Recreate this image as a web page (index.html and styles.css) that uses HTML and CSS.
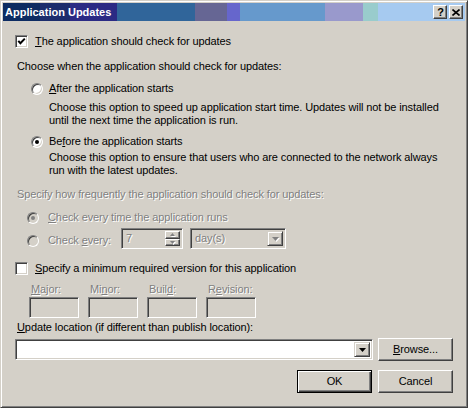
FILE: index.html
```html
<!DOCTYPE html>
<html>
<head>
<meta charset="utf-8">
<title>Application Updates</title>
<link rel="stylesheet" href="styles.css">
</head>
<body>
<div class="window">
  <div class="titlebar">
    <span class="title">Application Updates</span>
    <div class="caption-btns">
      <span class="cbtn help">?</span>
      <span class="cbtn close"><svg width="8" height="7" viewBox="0 0 8 7"><path d="M0.5 0.5 L7.5 6.5 M7.5 0.5 L0.5 6.5" stroke="#000" stroke-width="1.6"/></svg></span>
    </div>
  </div>
  <div class="content">
    <div class="row r-main">
      <span class="chk"><svg width="9" height="9" viewBox="0 0 9 9"><polyline points="1.3,3.8 3.4,6.2 7.8,1.6" fill="none" stroke="#000" stroke-width="2"/></svg></span>
      <span class="chk-label"><u>T</u>he application should check for updates</span>
    </div>
    <div class="row r-choose">Choose when the application should check for updates:</div>
    <div class="row r-after">
      <span class="radio"></span>
      <span class="radio-label"><u>A</u>fter the application starts</span>
    </div>
    <div class="desc d-after">Choose this option to speed up application start time. Updates will not be installed<br>until the next time the application is run.</div>
    <div class="row r-before">
      <span class="radio on"></span>
      <span class="radio-label">Be<u>f</u>ore the application starts</span>
    </div>
    <div class="desc d-before">Choose this option to ensure that users who are connected to the network always<br>run with the latest updates.</div>
    <div class="row r-spec disabled">Specify how frequently the application should check for updates:</div>
    <div class="row r-everytime">
      <span class="radio dis on"></span>
      <span class="radio-label disabled"><u>C</u>heck every time the application runs</span>
    </div>
    <div class="row r-every">
      <span class="radio dis"></span>
      <span class="radio-label disabled every-label">Check <u>e</u>very:</span>
      <div class="spin">
        <span class="spin-text disabled">7</span>
        <div class="spin-btns">
          <span class="spin-btn"><svg width="5" height="3" viewBox="0 0 5 3"><polygon points="0,3 5,3 2.5,0" fill="#808080"/></svg></span>
          <span class="spin-btn"><svg width="5" height="3" viewBox="0 0 5 3"><polygon points="0,0 5,0 2.5,3" fill="#808080"/></svg></span>
        </div>
      </div>
      <div class="combo combo-unit">
        <span class="combo-text disabled">day(s)</span>
        <span class="drop-btn"><svg width="7" height="4" viewBox="0 0 7 4"><polygon points="0,0 7,0 3.5,4" fill="#808080"/></svg></span>
      </div>
    </div>
    <div class="row r-min">
      <span class="chk"></span>
      <span class="chk-label"><u>S</u>pecify a minimum required version for this application</span>
    </div>
    <div class="version-grid">
      <div class="ver">
        <span class="ver-label disabled"><u>M</u>ajor:</span>
        <span class="field dis"></span>
      </div>
      <div class="ver">
        <span class="ver-label disabled">Mi<u>n</u>or:</span>
        <span class="field dis"></span>
      </div>
      <div class="ver">
        <span class="ver-label disabled">Buil<u>d</u>:</span>
        <span class="field dis"></span>
      </div>
      <div class="ver">
        <span class="ver-label disabled">R<u>e</u>vision:</span>
        <span class="field dis"></span>
      </div>
    </div>
    <div class="row r-loc-label"><u>U</u>pdate location (if different than publish location):</div>
    <div class="row r-loc">
      <div class="combo combo-loc">
        <span class="combo-text"></span>
        <span class="drop-btn"><svg width="7" height="4" viewBox="0 0 7 4"><polygon points="0,0 7,0 3.5,4" fill="#000"/></svg></span>
      </div>
      <span class="btn"><u>B</u>rowse...</span>
    </div>
    <div class="row r-buttons">
      <span class="btn default">OK</span>
      <span class="btn">Cancel</span>
    </div>
  </div>
</div>
</body>
</html>
```

FILE: styles.css
```css
* { box-sizing: border-box; }
html, body { margin: 0; padding: 0; }
body {
  width: 468px;
  height: 408px;
  background: #d4d0c8;
  font-family: "Liberation Sans", Arial, sans-serif;
  font-size: 11px;
  line-height: 13px;
  color: #000;
  letter-spacing: -0.1px;
  overflow: hidden;
}
u { text-decoration: underline; text-underline-offset: 1px; }

.window {
  width: 468px;
  height: 408px;
  background: #d4d0c8;
  border: 1px solid;
  border-color: #d4d0c8 #404040 #404040 #d4d0c8;
  box-shadow: inset 1px 1px #fff, inset -1px -1px #808080;
  padding: 2px;
}

.titlebar {
  height: 18px;
  display: flex;
  align-items: center;
  justify-content: space-between;
  padding: 0 2px 0 2px;
  background: linear-gradient(to right,
    #0d2c62 0px, #0d2c62 37px,
    #1c2d6c 37px, #1c2d6c 67px,
    #2b2a84 67px, #2b2a84 114px,
    #30659a 114px, #30659a 192px,
    #666694 192px, #666694 224px,
    #6666cc 224px, #6666cc 237px,
    #6699cc 237px, #6699cc 322px,
    #9999cc 322px, #9999cc 360px,
    #99cccc 360px, #99cccc 375px,
    #a6caf0 375px, #a6caf0 100%);
}
.title {
  color: #fff;
  font-weight: bold;
  font-size: 11px;
  line-height: 18px;
  letter-spacing: 0;
}
.caption-btns { display: flex; gap: 2px; }
.cbtn {
  width: 14px;
  height: 14px;
  background: #d4d0c8;
  border: 1px solid;
  border-color: #fff #404040 #404040 #fff;
  box-shadow: inset -1px -1px #808080;
  display: flex;
  align-items: center;
  justify-content: center;
  font-weight: bold;
  font-size: 11px;
  line-height: 12px;
  color: #000;
}
.help { padding-left: 1px; }

.content { padding: 0 12px; }
.row { display: flex; align-items: flex-start; white-space: nowrap; }

.chk {
  width: 13px;
  height: 13px;
  flex: none;
  background: #fff;
  border: 1px solid;
  border-color: #808080 #fff #fff #808080;
  box-shadow: inset 1px 1px #404040, inset -1px -1px #d4d0c8;
  display: flex;
  align-items: center;
  justify-content: center;
}
.chk svg { display: block; }
.chk-label { margin-left: 7px; }

.radio {
  width: 12px;
  height: 12px;
  flex: none;
  border-radius: 50%;
  background: #fff;
  border: 1px solid;
  border-color: #808080 #fff #fff #808080;
  box-shadow: inset 1px 1px #404040, inset -1px -1px #d4d0c8;
  display: flex;
  align-items: center;
  justify-content: center;
  margin-top: 1px;
}
.radio.on::after {
  content: "";
  width: 4px;
  height: 4px;
  border-radius: 50%;
  background: #000;
}
.radio.dis { background: #d4d0c8; }
.radio.dis.on::after { background: #808080; }
.radio-label { margin-left: 6px; }

.disabled { color: #808080; text-shadow: 1px 1px 0 #fff; }

.r-main { margin-top: 14px; }
.r-choose { margin-top: 12px; padding-left: 2px; }
.r-after { margin-top: 9px; padding-left: 16px; }
.desc { padding-left: 34px; white-space: nowrap; }
.d-after { margin-top: 6px; }
.r-before { margin-top: 8px; padding-left: 16px; }
.d-before { margin-top: 3px; }
.r-spec { margin-top: 11px; padding-left: 2px; }
.r-everytime { margin-top: 10px; padding-left: 12px; }
.r-everytime .radio-label { margin-left: 9px; }
.r-every { margin-top: 4px; padding-left: 12px; height: 21px; }
.r-every .radio { margin-top: 7px; }
.every-label { margin-left: 9px; margin-top: 6px; width: 73px; }

.spin {
  width: 62px;
  height: 21px;
  background: #d4d0c8;
  border: 1px solid;
  border-color: #808080 #fff #fff #808080;
  box-shadow: inset 1px 1px #404040, inset -1px -1px #d4d0c8;
  display: flex;
  padding: 2px 2px 2px 2px;
}
.spin-text { flex: 1; padding-left: 2px; line-height: 15px; }
.spin-btns { width: 15px; display: flex; flex-direction: column; }
.spin-btn {
  flex: 1;
  background: #d4d0c8;
  border: 1px solid;
  border-color: #fff #404040 #404040 #fff;
  box-shadow: inset -1px -1px #808080;
  display: flex;
  align-items: center;
  justify-content: center;
}
.spin-btn svg { display: block; filter: drop-shadow(1px 1px 0 #fff); }

.combo {
  height: 21px;
  border: 1px solid;
  border-color: #808080 #fff #fff #808080;
  box-shadow: inset 1px 1px #404040, inset -1px -1px #d4d0c8;
  display: flex;
  padding: 2px;
}
.combo-unit { width: 96px; margin-left: 7px; background: #d4d0c8; }
.combo-text { flex: 1; padding-left: 2px; line-height: 15px; }
.drop-btn {
  width: 16px;
  background: #d4d0c8;
  border: 1px solid;
  border-color: #d4d0c8 #404040 #404040 #d4d0c8;
  box-shadow: inset 1px 1px #fff, inset -1px -1px #808080;
  display: flex;
  align-items: center;
  justify-content: center;
}
.drop-btn svg { display: block; }
.combo-unit .drop-btn svg { filter: drop-shadow(1px 1px 0 #fff); }

.r-min { margin-top: 13px; }

.version-grid {
  display: flex;
  gap: 9px;
  padding-left: 14px;
  margin-top: 8px;
}
.ver { width: 50px; display: flex; flex-direction: column; gap: 1px; }
.ver-label { padding-left: 2px; }
.field {
  display: block;
  height: 21px;
  background: #fff;
  border: 1px solid;
  border-color: #808080 #fff #fff #808080;
  box-shadow: inset 1px 1px #404040, inset -1px -1px #d4d0c8;
}
.field.dis { background: #d4d0c8; }

.r-loc-label { margin-top: 3px; padding-left: 2px; }
.r-loc { margin-top: 4px; gap: 5px; height: 23px; }
.combo-loc { width: 358px; background: #fff; margin-top: 1px; }

.btn {
  width: 75px;
  height: 23px;
  background: #d4d0c8;
  border: 1px solid;
  border-color: #fff #404040 #404040 #fff;
  box-shadow: inset -1px -1px #808080;
  display: flex;
  align-items: center;
  justify-content: center;
  padding-bottom: 1px;
}
.btn.default {
  border: 1px solid #000;
  box-shadow: inset 1px 1px #fff, inset -1px -1px #404040, inset -2px -2px #808080;
}
.r-buttons { margin-top: 9px; justify-content: flex-end; gap: 6px; }
```
